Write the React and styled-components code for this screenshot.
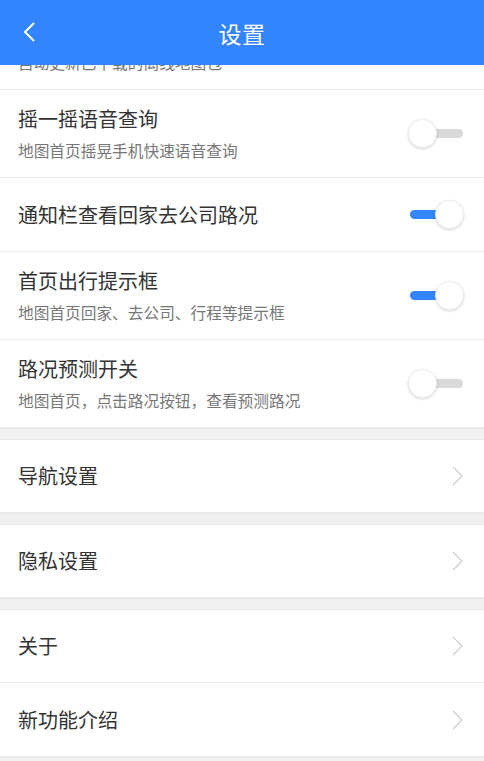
import React from "react";
import styled, { createGlobalStyle } from "styled-components";

const Global = createGlobalStyle`
  html, body { margin: 0; padding: 0; background: #f2f2f2; }
  body { font-family: "Noto Sans CJK SC", "Noto Sans", sans-serif; }
  * { box-sizing: border-box; }
`;

const Page = styled.div`
  width: 484px;
  height: 761px;
  display: flex;
  flex-direction: column;
  overflow: hidden;
  background: #f2f2f2;
`;

const Header = styled.header`
  position: relative;
  z-index: 2;
  height: 65px;
  flex: 0 0 65px;
  background: #3385ff;
  display: flex;
  align-items: center;
  justify-content: center;
`;

const BackButton = styled.button`
  position: absolute;
  left: 18px;
  top: 18px;
  width: 22px;
  height: 28px;
  padding: 0;
  border: 0;
  background: transparent;
  display: flex;
  align-items: center;
  justify-content: center;
`;

const Title = styled.h1`
  margin: 0;
  color: #fff;
  font-size: 23px;
  font-weight: 400;
  letter-spacing: 0.5px;
`;

const Viewport = styled.div`
  flex: 1;
  overflow: hidden;
`;

const List = styled.div`
  margin-top: -63px;
  display: flex;
  flex-direction: column;
`;

const Row = styled.div`
  height: ${(p) => p.$h}px;
  background: #fff;
  border-bottom: 1px solid ${(p) => (p.$last ? "transparent" : "#ececec")};
  display: flex;
  align-items: center;
  padding: 0 20px 0 18px;
`;

const TextCol = styled.div`
  flex: 1;
  display: flex;
  flex-direction: column;
  gap: 7px;
  min-width: 0;
`;

const RowTitle = styled.div`
  font-size: 20px;
  line-height: 28px;
  color: #333;
  white-space: nowrap;
`;

const RowSub = styled.div`
  font-size: 15.7px;
  line-height: 22px;
  color: #777;
  white-space: nowrap;
`;

const Gap = styled.div`
  height: 12px;
  background: #f1f1f1;
  border-top: 1px solid #e8e8e8;
  border-bottom: 1px solid #e8e8e8;
`;

const SwitchBox = styled.div`
  position: relative;
  width: 56px;
  height: 30px;
  flex: 0 0 56px;
`;

const Track = styled.div`
  position: absolute;
  left: 2px;
  right: 1px;
  top: 10px;
  height: 9px;
  border-radius: 5px;
  background: ${(p) => (p.$on ? "#3385ff" : "#d9d9d9")};
`;

const Knob = styled.div`
  position: absolute;
  top: 0;
  ${(p) => (p.$on ? "right: 0;" : "left: 0;")}
  width: 29px;
  height: 29px;
  border-radius: 50%;
  background: #fff;
  border: 1px solid #eeeeee;
  box-shadow: 0 1px 3px rgba(0, 0, 0, 0.16);
`;

const Switch = ({ on }) => (
  <SwitchBox>
    <Track $on={on} />
    <Knob $on={on} />
  </SwitchBox>
);

const Chevron = () => (
  <svg width="12" height="20" viewBox="0 0 12 20" fill="none">
    <path d="M1.5 1.5 L10 10 L1.5 18.5" stroke="#cfcfcf" strokeWidth="1.4" strokeLinecap="round" strokeLinejoin="round" />
  </svg>
);

const toggles = [
  { title: "离线地图自动更新", sub: "自动更新已下载的离线地图包", on: true },
  { title: "摇一摇语音查询", sub: "地图首页摇晃手机快速语音查询", on: false },
  { title: "通知栏查看回家去公司路况", on: true },
  { title: "首页出行提示框", sub: "地图首页回家、去公司、行程等提示框", on: true },
  { title: "路况预测开关", sub: "地图首页，点击路况按钮，查看预测路况", on: false },
];

export default function App() {
  return (
    <Page>
      <Global />
      <Header>
        <BackButton aria-label="返回">
          <svg width="12" height="20" viewBox="0 0 12 20" fill="none">
            <path d="M10.5 1.5 L2 10 L10.5 18.5" stroke="#fff" strokeWidth="2" strokeLinecap="round" strokeLinejoin="round" />
          </svg>
        </BackButton>
        <Title>设置</Title>
      </Header>
      <Viewport>
        <List>
          {toggles.map((t, i) => (
            <Row key={i} $h={t.sub ? 88 : 74}>
              <TextCol>
                <RowTitle>{t.title}</RowTitle>
                {t.sub && <RowSub>{t.sub}</RowSub>}
              </TextCol>
              <Switch on={t.on} />
            </Row>
          ))}
          <Gap />
          <Row $h={73}>
            <TextCol><RowTitle>导航设置</RowTitle></TextCol>
            <Chevron />
          </Row>
          <Gap />
          <Row $h={73}>
            <TextCol><RowTitle>隐私设置</RowTitle></TextCol>
            <Chevron />
          </Row>
          <Gap />
          <Row $h={73}>
            <TextCol><RowTitle>关于</RowTitle></TextCol>
            <Chevron />
          </Row>
          <Row $h={74}>
            <TextCol><RowTitle>新功能介绍</RowTitle></TextCol>
            <Chevron />
          </Row>
          <Gap />
        </List>
      </Viewport>
    </Page>
  );
}
